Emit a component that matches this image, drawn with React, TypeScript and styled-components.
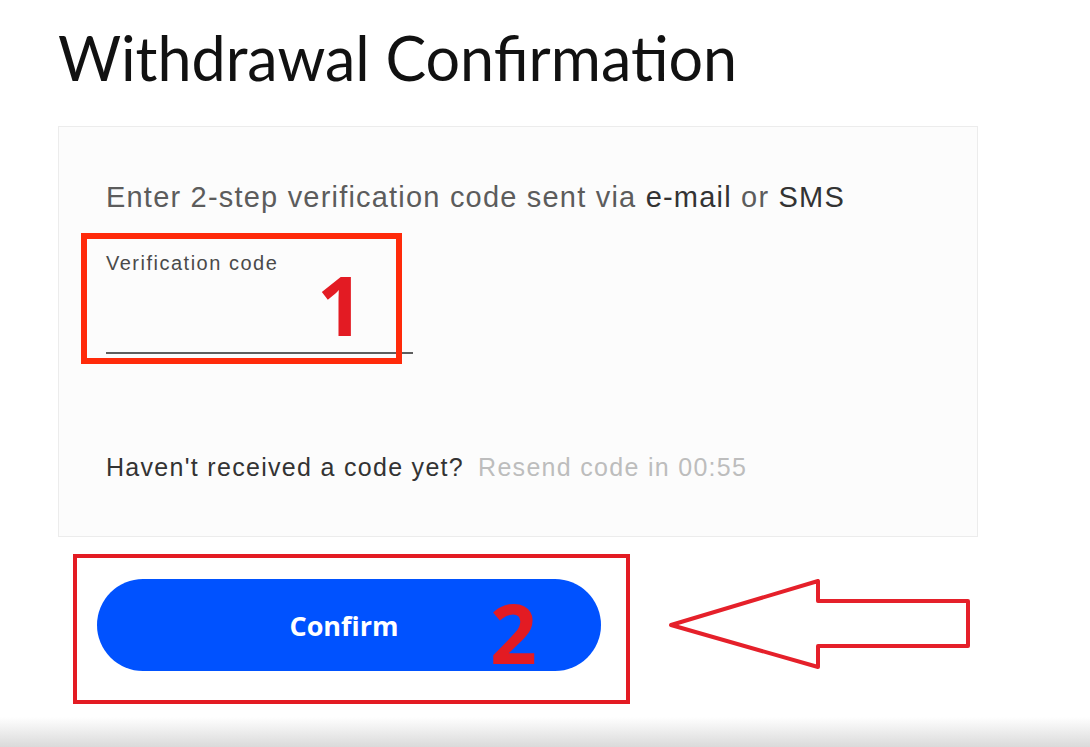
import React from 'react';
import styled, { createGlobalStyle } from 'styled-components';

const GlobalStyle = createGlobalStyle`
  html, body {
    margin: 0;
    padding: 0;
    background: #ffffff;
  }
  #root {
    min-height: 100vh;
  }
`;

const Page = styled.div`
  min-height: 100vh;
  display: flex;
  flex-direction: column;
  box-sizing: border-box;
`;

const Main = styled.main`
  flex: 1;
  padding: 0 0 0 58px;
`;

const Title = styled.h1`
  margin: 0;
  padding-top: 22px;
  font-family: Lato, 'Open Sans', sans-serif;
  font-weight: 400;
  font-size: 61px;
  line-height: 72px;
  color: #111;
`;

const Card = styled.section`
  margin-top: 32px;
  width: 920px;
  height: 411px;
  box-sizing: border-box;
  padding: 54px 0 0 47px;
  background: #fcfcfc;
  border: 1px solid #ececec;
  display: flex;
  flex-direction: column;
`;

const Instruction = styled.p`
  margin: 0;
  font-family: 'Liberation Sans', Arial, sans-serif;
  font-size: 29px;
  line-height: 32px;
  letter-spacing: 1.2px;
  color: #5c5c5c;
  white-space: nowrap;
`;

const Strong = styled.span`
  color: #333;
`;

const Field = styled.div`
  position: relative;
  margin-top: 38px;
  width: 307px;
  height: 103px;
  border-bottom: 2px solid #5e5e5e;
  box-sizing: border-box;
`;

const Label = styled.label`
  display: block;
  font-family: 'Liberation Sans', Arial, sans-serif;
  font-size: 20px;
  line-height: 24px;
  letter-spacing: 1.5px;
  color: #4a4a4a;
`;

const Highlight = styled.div<{ $thick: number; $color: string }>`
  position: absolute;
  box-sizing: border-box;
  border: ${(p) => p.$thick}px solid ${(p) => p.$color};
  pointer-events: none;
`;

const FieldBox = styled(Highlight)`
  left: -25px;
  top: -18px;
  width: 321px;
  height: 131px;
`;

const Step = styled.span`
  position: absolute;
  font-family: 'Open Sans', Lato, sans-serif;
  font-weight: 700;
  font-size: 82px;
  line-height: 1;
  color: #e31b23;
`;

const StepOne = styled(Step)`
  left: 211px;
  top: 12px;
`;

const ResendRow = styled.div`
  margin-top: 98px;
  font-family: 'Liberation Sans', Arial, sans-serif;
  font-size: 25px;
  line-height: 30px;
  letter-spacing: 1.3px;
  display: flex;
  gap: 14px;
  white-space: nowrap;
`;

const Question = styled.span`
  color: #333;
`;

const Countdown = styled.span`
  color: #bdbdbd;
`;

const ButtonRow = styled.div`
  margin-top: 42px;
  padding-left: 39px;
  display: flex;
  align-items: center;
  gap: 67px;
`;

const ButtonWrap = styled.div`
  position: relative;
`;

const ButtonBox = styled(Highlight)`
  left: -24px;
  top: -25px;
  width: 557px;
  height: 150px;
`;

const ConfirmButton = styled.button`
  width: 504px;
  height: 92px;
  padding: 0 10px 0 0;
  border: none;
  border-radius: 46px;
  background: #0052ff;
  color: #fff;
  font-family: 'Open Sans', Lato, sans-serif;
  font-weight: 700;
  font-size: 27px;
  cursor: pointer;
`;

const StepTwo = styled(Step)`
  left: 393px;
  top: 12px;
`;

const Footer = styled.div`
  height: 30px;
  background: linear-gradient(to bottom, #ffffff, #dadada);
`;

function ArrowLeft() {
  return (
    <svg width="304" height="92" viewBox="0 0 304 92">
      <path
        d="M3 46 L150 2 L150 22 L300 22 L300 67 L150 67 L150 88 Z"
        fill="none"
        stroke="#e5202a"
        strokeWidth="4"
        strokeLinejoin="round"
      />
    </svg>
  );
}

export default function App() {
  return (
    <Page>
      <GlobalStyle />
      <Main>
        <Title>Withdrawal Confirmation</Title>
        <Card>
          <Instruction>
            Enter 2-step verification code sent via <Strong>e-mail</Strong> or <Strong>SMS</Strong>
          </Instruction>
          <Field>
            <Label>Verification code</Label>
            <FieldBox $thick={6} $color="#ff2a0a" />
            <StepOne>1</StepOne>
          </Field>
          <ResendRow>
            <Question>Haven't received a code yet?</Question>
            <Countdown>Resend code in 00:55</Countdown>
          </ResendRow>
        </Card>
        <ButtonRow>
          <ButtonWrap>
            <ConfirmButton>Confirm</ConfirmButton>
            <ButtonBox $thick={4} $color="#e31b23" />
            <StepTwo>2</StepTwo>
          </ButtonWrap>
          <ArrowLeft />
        </ButtonRow>
      </Main>
      <Footer />
    </Page>
  );
}
